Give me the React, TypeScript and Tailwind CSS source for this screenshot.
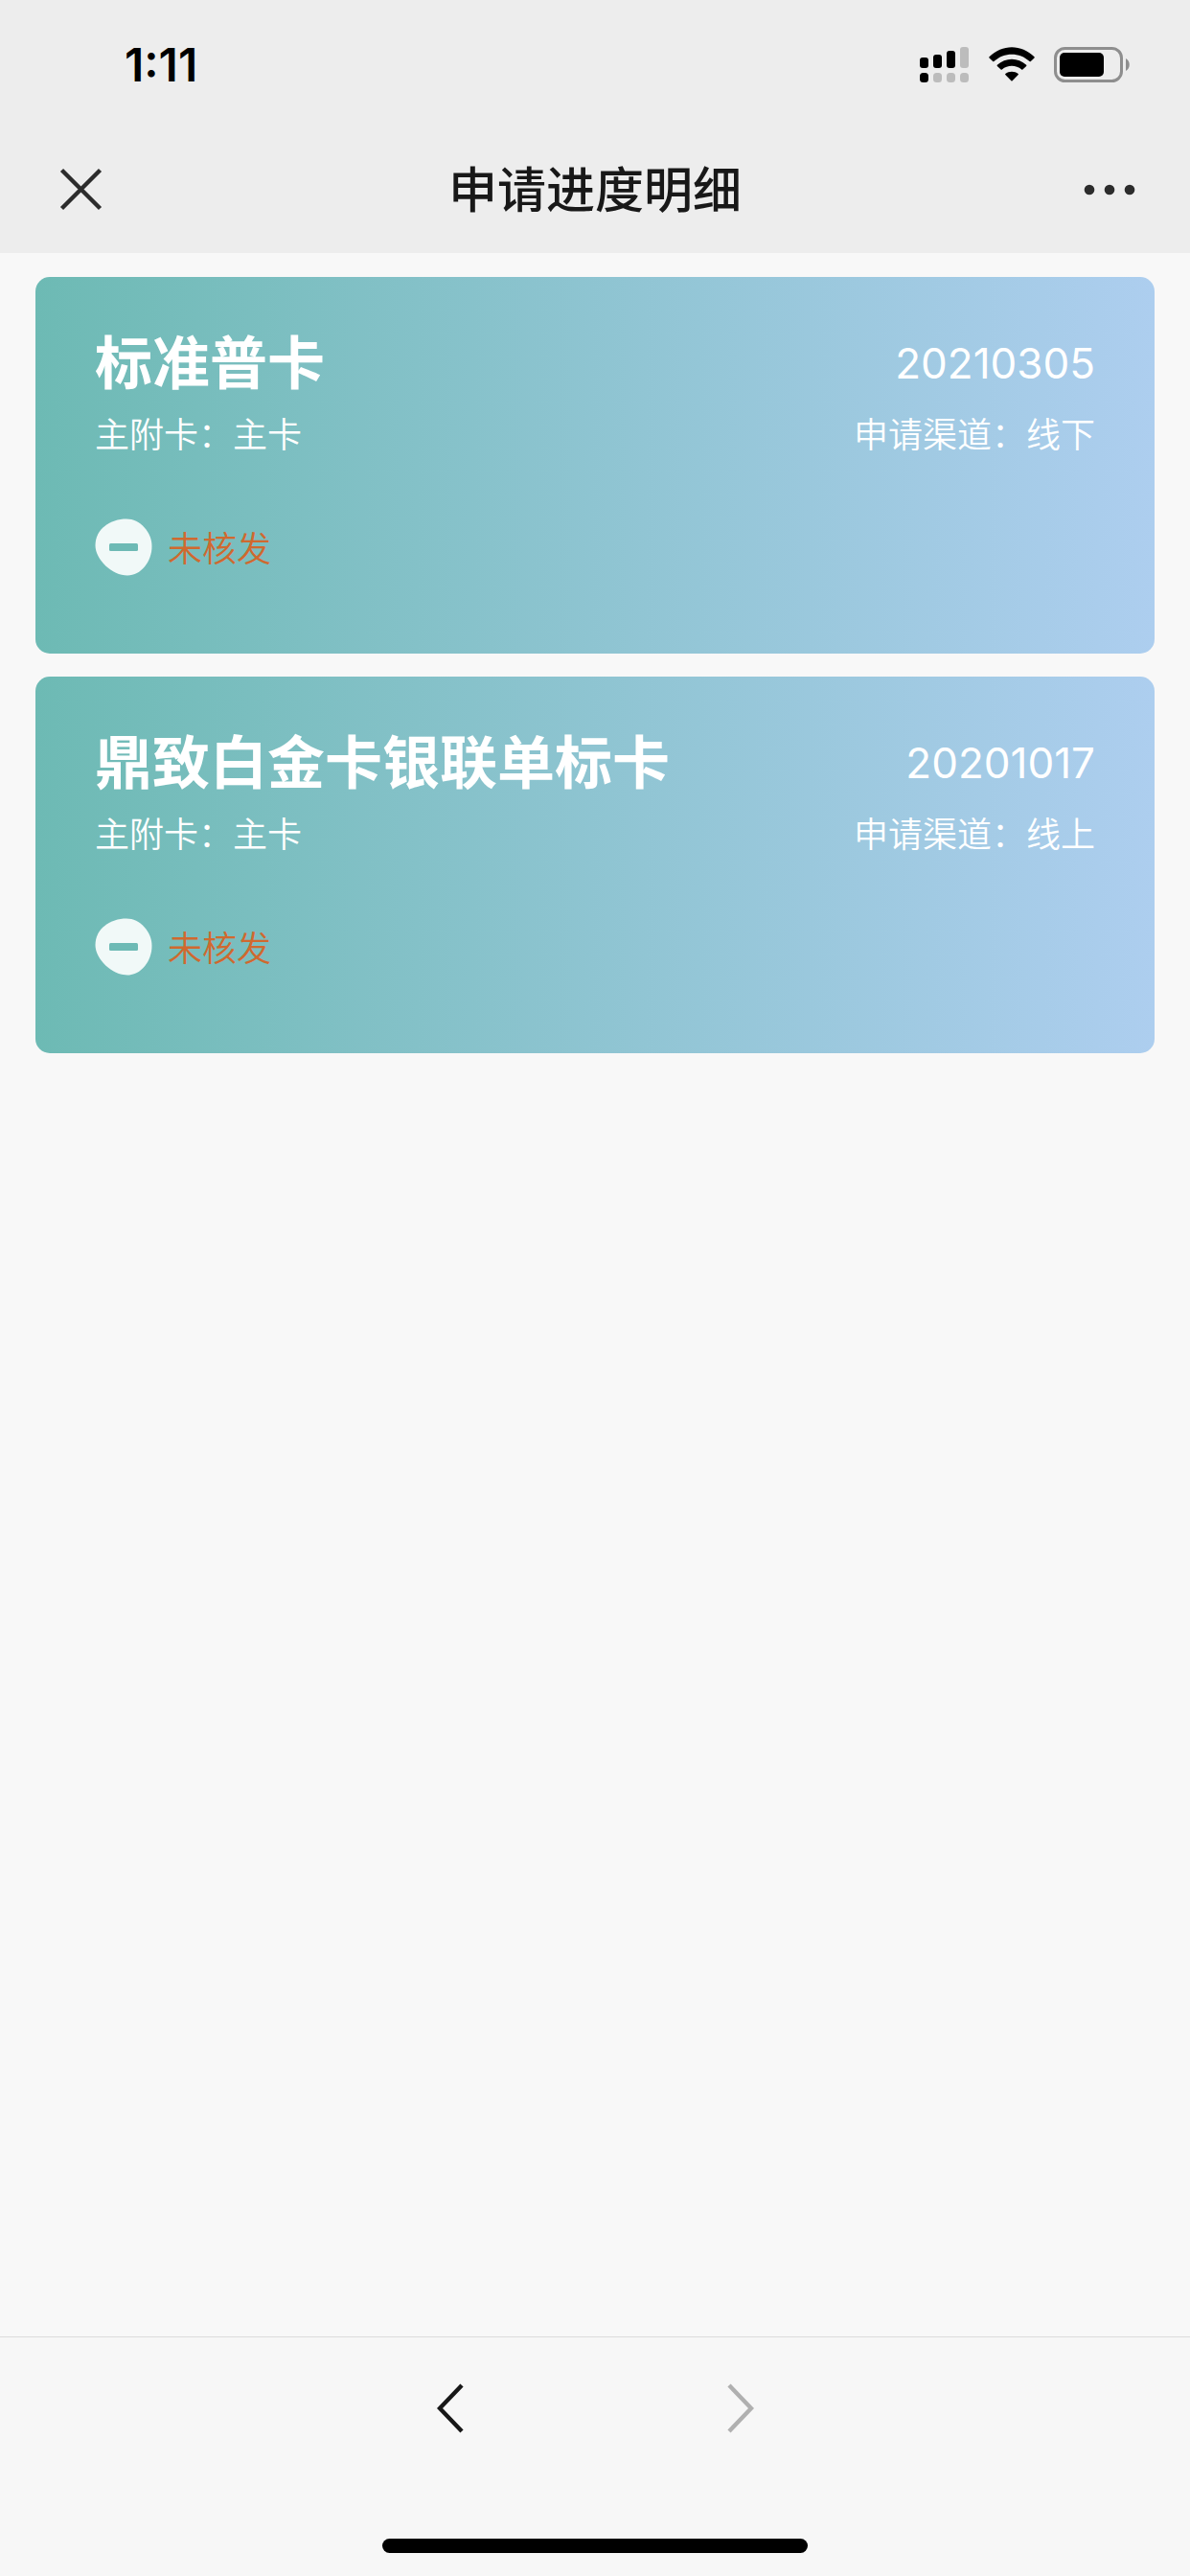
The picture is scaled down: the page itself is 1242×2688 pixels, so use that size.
import React from 'react';

type Application = {
  name: string;
  date: string;
  cardType: string;
  channel: string;
  status: string;
};

const applications: Application[] = [
  { name: '标准普卡', date: '20210305', cardType: '主卡', channel: '线下', status: '未核发' },
  { name: '鼎致白金卡银联单标卡', date: '20201017', cardType: '主卡', channel: '线上', status: '未核发' }
];

const SignalIcon = () => (
  <svg className="w-[52px] h-[38px]" viewBox="0 0 52 38" aria-hidden="true">
    <rect x="0" y="11" width="9" height="11" rx="3" />
    <rect x="14" y="8" width="9" height="14" rx="3" />
    <rect x="28" y="4" width="9" height="18" rx="3" />
    <rect x="42" y="0" width="9" height="22" rx="3" fill="#bcbcbc" />
    <rect x="0" y="27" width="9" height="10" rx="3.5" />
    <rect x="14" y="27" width="9" height="10" rx="3.5" fill="#bcbcbc" />
    <rect x="28" y="27" width="9" height="10" rx="3.5" fill="#bcbcbc" />
    <rect x="42" y="27" width="9" height="10" rx="3.5" fill="#bcbcbc" />
  </svg>
);

const WifiIcon = () => (
  <svg className="w-[48px] h-[38px]" viewBox="0 0 48 38" aria-hidden="true">
    <path d="M0.5 10.2 C14 -3.2 34 -3.2 47.5 10.2 Q48 10.8 47.5 11.4 L43.8 15 Q43.2 15.5 42.6 15 C32 5.2 16 5.2 5.4 15 Q4.8 15.5 4.2 15 L0.5 11.4 Q0 10.8 0.5 10.2 Z" />
    <path d="M8.8 18.8 C17.5 10.6 30.5 10.6 39.2 18.8 Q39.7 19.3 39.2 19.9 L35.4 23.6 Q34.8 24.1 34.2 23.6 C28.3 18.6 19.7 18.6 13.8 23.6 Q13.2 24.1 12.6 23.6 L8.8 19.9 Q8.3 19.3 8.8 18.8 Z" />
    <path d="M17.3 28 C21 25 27 25 30.7 28 Q31.2 28.5 30.7 29.1 L24.6 35.3 Q24 35.9 23.4 35.3 L17.3 29.1 Q16.8 28.5 17.3 28 Z" />
  </svg>
);

const BatteryIcon = () => (
  <svg className="w-[80px] h-[38px]" viewBox="0 0 80 38" aria-hidden="true">
    <rect x="1.5" y="1.5" width="69" height="34" rx="10" fill="none" stroke="#8e8e8e" strokeWidth="3" />
    <rect x="6" y="6" width="46" height="25" rx="5" />
    <path d="M75 12 C80 14.5 80 22.5 75 25 Z" fill="#8e8e8e" />
  </svg>
);

const RejectedIcon = () => (
  <svg className="w-[60px] h-[60px]" viewBox="0 0 60 60" aria-hidden="true">
    <path d="M33 0.5 C47 0.5 59.5 14 59.5 29 C59.5 45 48 59.5 34 59.5 C18 59.5 0.5 43 0.5 28 C0.5 11 16 0.5 33 0.5 Z" fill="#f1f9f8" />
    <rect x="15" y="26" width="30" height="8" rx="1.5" fill="#6dbab5" />
  </svg>
);

const ApplicationCard = ({ item }: { item: Application }) => (
  <li className="rounded-[15px] bg-linear-to-r from-[#6dbab4] to-[#adceef] px-[62px] pt-[50px] pb-[81px] text-white">
    <div className="flex items-center justify-between">
      <h2 className="text-[60px] leading-[80px] font-bold">{item.name}</h2>
      <time className="text-[44px] leading-[78px] font-normal">{item.date}</time>
    </div>
    <div className="mt-[10px] flex items-center justify-between text-[36px] leading-[50px] font-[350]">
      <p>主附卡：{item.cardType}</p>
      <p>申请渠道：{item.channel}</p>
    </div>
    <div className="mt-[62px] flex items-center gap-4">
      <RejectedIcon />
      <span className="pt-1 text-[36px] leading-[50px] font-[350] text-[#d0692f]">{item.status}</span>
    </div>
  </li>
);

const App = () => {
  return (
    <div className="flex min-h-screen flex-col bg-[#f8f8f8] font-['Inter','Noto_Sans_CJK_SC',sans-serif]">
      <header className="bg-[#ededed]">
        <div className="flex h-[132px] items-center justify-between pt-1 pr-[62px] pl-[130px]">
          <span className="text-[48px] leading-none font-semibold text-black">1:11</span>
          <div className="flex items-center gap-5">
            <SignalIcon />
            <WifiIcon />
            <BatteryIcon />
          </div>
        </div>
        <div className="flex h-[132px] items-center justify-between px-[60px]">
          <button type="button" aria-label="关闭" className="flex h-12 w-12 items-center justify-start">
            <svg className="h-12 w-12" viewBox="0 0 48 48" fill="none" stroke="#2c2c2c" strokeWidth="4.4">
              <path d="M4.5 3.5 L44.5 43.5 M44.5 3.5 L4.5 43.5" />
            </svg>
          </button>
          <h1 className="pt-[2px] text-[51px] leading-[72px] font-medium text-[#181818]">申请进度明细</h1>
          <button type="button" aria-label="更多" className="flex h-12 w-12 items-center justify-center">
            <svg className="h-3 w-14 shrink-0" viewBox="0 0 56 12" fill="#2c2c2c">
              <circle cx="7" cy="6" r="5.3" />
              <circle cx="28" cy="6" r="5.3" />
              <circle cx="49" cy="6" r="5.3" />
            </svg>
          </button>
        </div>
      </header>

      <main className="flex-1 px-[37px] py-[25px]">
        <ul className="flex flex-col gap-6">
          {applications.map((item, index) => (
            <ApplicationCard key={index} item={item} />
          ))}
        </ul>
      </main>

      <footer className="flex flex-col items-center border-t border-[#dcdcdc] bg-[#f7f7f7] pb-6">
        <nav className="flex h-[148px] items-center gap-[243px]">
          <button type="button" aria-label="后退" className="flex h-[60px] w-[60px] items-center justify-center">
            <svg className="h-[52px] w-7" viewBox="0 0 28 52" fill="none" stroke="#181818" strokeWidth="4.4">
              <path d="M26 2 L3 26 L26 50" />
            </svg>
          </button>
          <button type="button" aria-label="前进" disabled className="flex h-[60px] w-[60px] items-center justify-center">
            <svg className="h-[52px] w-7" viewBox="0 0 28 52" fill="none" stroke="#b0b0b0" strokeWidth="4.4">
              <path d="M2 2 L25 26 L2 50" />
            </svg>
          </button>
        </nav>
        <div className="mt-[62px] h-[15px] w-[444px] rounded-full bg-black" />
      </footer>
    </div>
  );
};

export default App;
